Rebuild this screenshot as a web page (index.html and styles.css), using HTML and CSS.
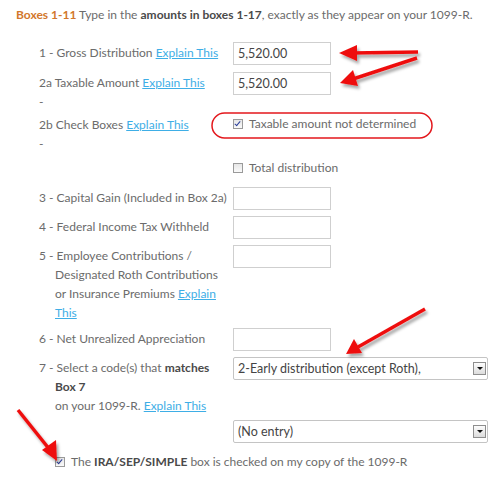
FILE: index.html
```html
<!DOCTYPE html>
<html lang="en">
<head>
    <meta charset="UTF-8">
    <title>1099-R Boxes 1-11</title>
    <link rel="stylesheet" href="styles.css">
</head>
<body>
<div class="page">
    <p class="intro"><span class="boxes">Boxes 1-11</span> Type in the <b>amounts in boxes 1-17</b>, exactly as they appear on your 1099-R.</p>

    <div class="form">
        <div class="row">
            <div class="label">1 - Gross Distribution <a href="#">Explain This</a></div>
            <div class="field"><input type="text" class="amount" value="5,520.00"></div>
        </div>
        <div class="row row-2a">
            <div class="label">2a Taxable Amount <a href="#">Explain This</a><br>-</div>
            <div class="field"><input type="text" class="amount" value="5,520.00"></div>
        </div>
        <div class="row row-2b">
            <div class="label">2b Check Boxes <a href="#">Explain This</a><br>-</div>
            <div class="field">
                <div class="check"><span class="box checked"></span><span>Taxable amount not determined</span></div>
                <div class="check check-second"><span class="box"></span><span>Total distribution</span></div>
            </div>
        </div>
        <div class="row">
            <div class="label">3 - Capital Gain (Included in Box 2a)</div>
            <div class="field"><input type="text" class="amount"></div>
        </div>
        <div class="row">
            <div class="label">4 - Federal Income Tax Withheld</div>
            <div class="field"><input type="text" class="amount"></div>
        </div>
        <div class="row">
            <div class="label hang">5 - Employee Contributions /<br>Designated Roth Contributions<br>or Insurance Premiums <a href="#">Explain<br>This</a></div>
            <div class="field"><input type="text" class="amount"></div>
        </div>
        <div class="row">
            <div class="label">6 - Net Unrealized Appreciation</div>
            <div class="field"><input type="text" class="amount"></div>
        </div>
        <div class="row row-7">
            <div class="label hang">7 - Select a code(s) that <b>matches</b><br><b>Box 7</b><br>on your 1099-R. <a href="#">Explain This</a></div>
            <div class="field"><div class="select"><span>2-Early distribution (except Roth),</span><span class="select-btn"></span></div></div>
        </div>
        <div class="row row-code2">
            <div class="label"></div>
            <div class="field"><div class="select"><span>(No entry)</span><span class="select-btn"></span></div></div>
        </div>
    </div>

    <div class="check ira"><span class="box checked"></span><span>The <b>IRA/SEP/SIMPLE</b> box is checked on my copy of the 1099-R</span></div>

    <!-- annotations drawn over the screenshot -->
    <svg class="marks" width="500" height="477" viewBox="0 0 500 477">
        <defs>
            <filter id="shadow" x="-20%" y="-50%" width="140%" height="200%">
                <feDropShadow dx="2" dy="3" stdDeviation="1.5" flood-color="#000" flood-opacity="0.35"/>
            </filter>
        </defs>
        <rect x="212" y="113" width="220" height="25" rx="12.5" fill="none" stroke="#e3171c" stroke-width="1.5"/>
        <g filter="url(#shadow)" fill="#ee1010" stroke="#ee1010">
            <line x1="418" y1="52" x2="352" y2="53" stroke-width="3.5"/>
            <polygon points="339,53 357,45 357,61" stroke="none"/>
            <line x1="417" y1="58" x2="353" y2="79" stroke-width="3.5"/>
            <polygon points="340,83 353,70 358,86" stroke="none"/>
            <line x1="425" y1="309" x2="358" y2="347" stroke-width="3.5"/>
            <polygon points="346,354 354,339 362,353" stroke="none"/>
            <line x1="18" y1="410" x2="50" y2="450" stroke-width="3.5"/>
            <polygon points="57,461 42,450 56,440" stroke="none"/>
        </g>
    </svg>
</div>
</body>
</html>
```

FILE: styles.css
```css
body {
    margin: 0;
    font-family: 'Lato', 'Open Sans', sans-serif;
    font-size: 12px;
    color: #6b6b6b;
    background: #fff;
}
.page {
    position: relative;
    width: 500px;
    height: 477px;
    overflow: hidden;
}
.intro {
    margin: 0;
    padding: 5px 0 0 16px;
    line-height: 19px;
}
.boxes {
    color: #d2772c;
    font-weight: bold;
}
b {
    color: #4a4a4a;
}
a {
    color: #3eaee6;
}
.form {
    margin-top: 18px;
    padding-left: 39px;
}
.row {
    display: flex;
    margin-bottom: 6px;
}
.row:first-child {
    margin-bottom: 7px;
}
.row-2a {
    margin-bottom: 3px;
}
.row-2b {
    margin-bottom: 10px;
}
.row-7 {
    margin-bottom: 5px;
}
.label {
    width: 194px;
    flex-shrink: 0;
    padding-top: 1px;
    line-height: 19px;
}
.label.hang {
    padding-left: 16px;
    text-indent: -16px;
    box-sizing: border-box;
}
.amount {
    width: 98px;
    height: 23px;
    box-sizing: border-box;
    border: 1px solid #cfcfcf;
    padding: 0 4px;
    font-family: inherit;
    font-size: 12.5px;
    color: #444;
    margin: 0;
}
.check {
    display: flex;
    align-items: center;
    line-height: 19px;
}
.check-second {
    margin-top: 25px;
}
.box {
    width: 8px;
    height: 8px;
    border: 1px solid #9a9a9a;
    background: linear-gradient(#e6e6e6, #fafafa);
    margin-right: 6px;
    position: relative;
    flex-shrink: 0;
}
.box.checked::after {
    content: "";
    position: absolute;
    left: 2px;
    top: 0;
    width: 2px;
    height: 5px;
    border: solid #2a3d9a;
    border-width: 0 1.5px 1.5px 0;
    transform: rotate(40deg);
}
.select {
    width: 255px;
    height: 23px;
    box-sizing: border-box;
    border: 1px solid #c4c4c4;
    border-radius: 2px;
    display: flex;
    align-items: center;
    justify-content: space-between;
    padding: 0 1px 0 4px;
    color: #444;
    font-size: 12.5px;
}
.select-btn {
    width: 11px;
    height: 11px;
    border: 1px solid #8e8e8e;
    background: linear-gradient(#fdfdfd, #dcdcdc);
    position: relative;
}
.select-btn::after {
    content: "";
    position: absolute;
    left: 3px;
    top: 4px;
    border-left: 3px solid transparent;
    border-right: 3px solid transparent;
    border-top: 3px solid #111;
}
.row-code2 {
    margin-bottom: 9px;
}
.ira {
    padding-left: 55px;
}
.marks {
    position: absolute;
    left: 0;
    top: 0;
    pointer-events: none;
}
```
